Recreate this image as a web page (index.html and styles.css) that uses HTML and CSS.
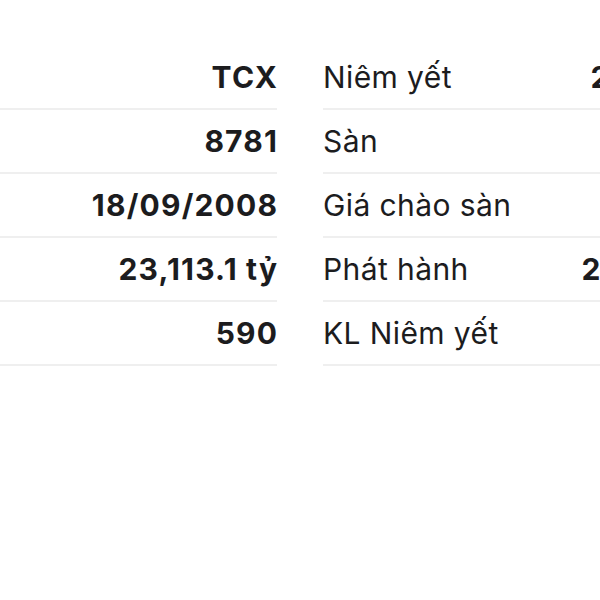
FILE: index.html
```html
<!DOCTYPE html>
<html lang="vi">
<head>
<meta charset="utf-8">
<title>Thông tin cổ phiếu</title>
<link rel="stylesheet" href="styles.css">
</head>
<body>
<div class="viewport">
  <div class="info">
    <div class="table table-left">
      <div class="row"><span class="label">Mã CK</span><span class="value">TCX</span></div>
      <div class="row"><span class="label">Mã ngành</span><span class="value">8781</span></div>
      <div class="row"><span class="label">Ngày thành lập</span><span class="value">18/09/2008</span></div>
      <div class="row"><span class="label">Vốn điều lệ</span><span class="value">23,113.1 tỷ</span></div>
      <div class="row"><span class="label">Nhân viên</span><span class="value">590</span></div>
    </div>
    <div class="table table-right">
      <div class="row"><span class="label">Niêm yết</span><span class="value">24/12/2008</span></div>
      <div class="row"><span class="label">Sàn</span><span class="value">HOSE</span></div>
      <div class="row"><span class="label">Giá chào sàn</span><span class="value">46.8</span></div>
      <div class="row"><span class="label">Phát hành</span><span class="value value-tabular">231,131,264</span></div>
      <div class="row"><span class="label">KL Niêm yết</span><span class="value">2,311.3 tr</span></div>
    </div>
  </div>
</div>
</body>
</html>
```
FILE: styles.css
```css
html, body {
  margin: 0;
  padding: 0;
  background: #ffffff;
}

.viewport {
  width: 600px;
  height: 600px;
  overflow: hidden;
}

.info {
  display: flex;
  gap: 46px;
  margin-left: -323px;
  padding-top: 46px;
  font-family: Inter, "Noto Sans", sans-serif;
  font-size: 30px;
  color: #1c1c1e;
}

.table {
  flex: none;
}

.table-left {
  width: 600px;
}

.table-right {
  width: 451px;
}

.row {
  display: flex;
  justify-content: space-between;
  align-items: flex-end;
  height: 64px;
  padding-bottom: 16px;
  box-sizing: border-box;
  border-bottom: 2px solid #efefef;
  line-height: 1;
}

.label {
  font-weight: 400;
  letter-spacing: 0.4px;
  white-space: nowrap;
}

.value {
  font-weight: 700;
  letter-spacing: 1.2px;
  white-space: nowrap;
  margin-right: -1.2px;
}

.value-tabular {
  font-variant-numeric: tabular-nums;
  letter-spacing: 0.2px;
  margin-right: -0.2px;
}
```
